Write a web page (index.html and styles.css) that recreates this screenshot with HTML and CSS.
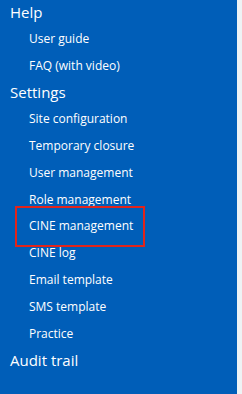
FILE: index.html
```html
<!DOCTYPE html>
<html lang="en">
<head>
    <meta charset="UTF-8">
    <meta name="viewport" content="width=device-width, initial-scale=1.0">
    <title>Menu</title>
    <link rel="stylesheet" href="styles.css">
</head>
<body>
    <div class="layout">
        <nav class="sidebar">
            <ul class="menu">
                <li class="menu-title">Help</li>
                <li class="menu-item">User guide</li>
                <li class="menu-item">FAQ (with video)</li>
                <li class="menu-title">Settings</li>
                <li class="menu-item">Site configuration</li>
                <li class="menu-item">Temporary closure</li>
                <li class="menu-item">User management</li>
                <li class="menu-item">Role management</li>
                <li class="menu-item marked">CINE management<span class="mark"></span></li>
                <li class="menu-item">CINE log</li>
                <li class="menu-item">Email template</li>
                <li class="menu-item">SMS template</li>
                <li class="menu-item">Practice</li>
                <li class="menu-title">Audit trail</li>
            </ul>
        </nav>
        <div class="page"></div>
    </div>
</body>
</html>
```

FILE: styles.css
```css
:root {
    --panel-bg: #005eb8;
    --page-bg: #eef3f5;
    --text: #ffffff;
    --mark: #e3241b;
}

body {
    margin: 0;
    height: 100vh;
    overflow: hidden;
    font-family: 'Open Sans', 'Noto Sans', sans-serif;
    color: var(--text);
}

.layout {
    display: flex;
    height: 100%;
}

.sidebar {
    width: 237px;
    background-color: var(--panel-bg);
}

.page {
    flex: 1;
    background-color: var(--page-bg);
}

.menu {
    list-style: none;
    margin: -1px 0 0;
    padding: 0;
}

.menu-title {
    padding-left: 10px;
    font-size: 15px;
    line-height: 26.8px;
}

.menu-item {
    padding-left: 29px;
    font-size: 12px;
    line-height: 26.8px;
}

/* red highlight frame round one row */
.marked {
    position: relative;
}

.mark {
    position: absolute;
    top: -7px;
    bottom: -7px;
    left: 15px;
    width: 130px;
    border: 2px solid var(--mark);
    box-sizing: border-box;
}
```
